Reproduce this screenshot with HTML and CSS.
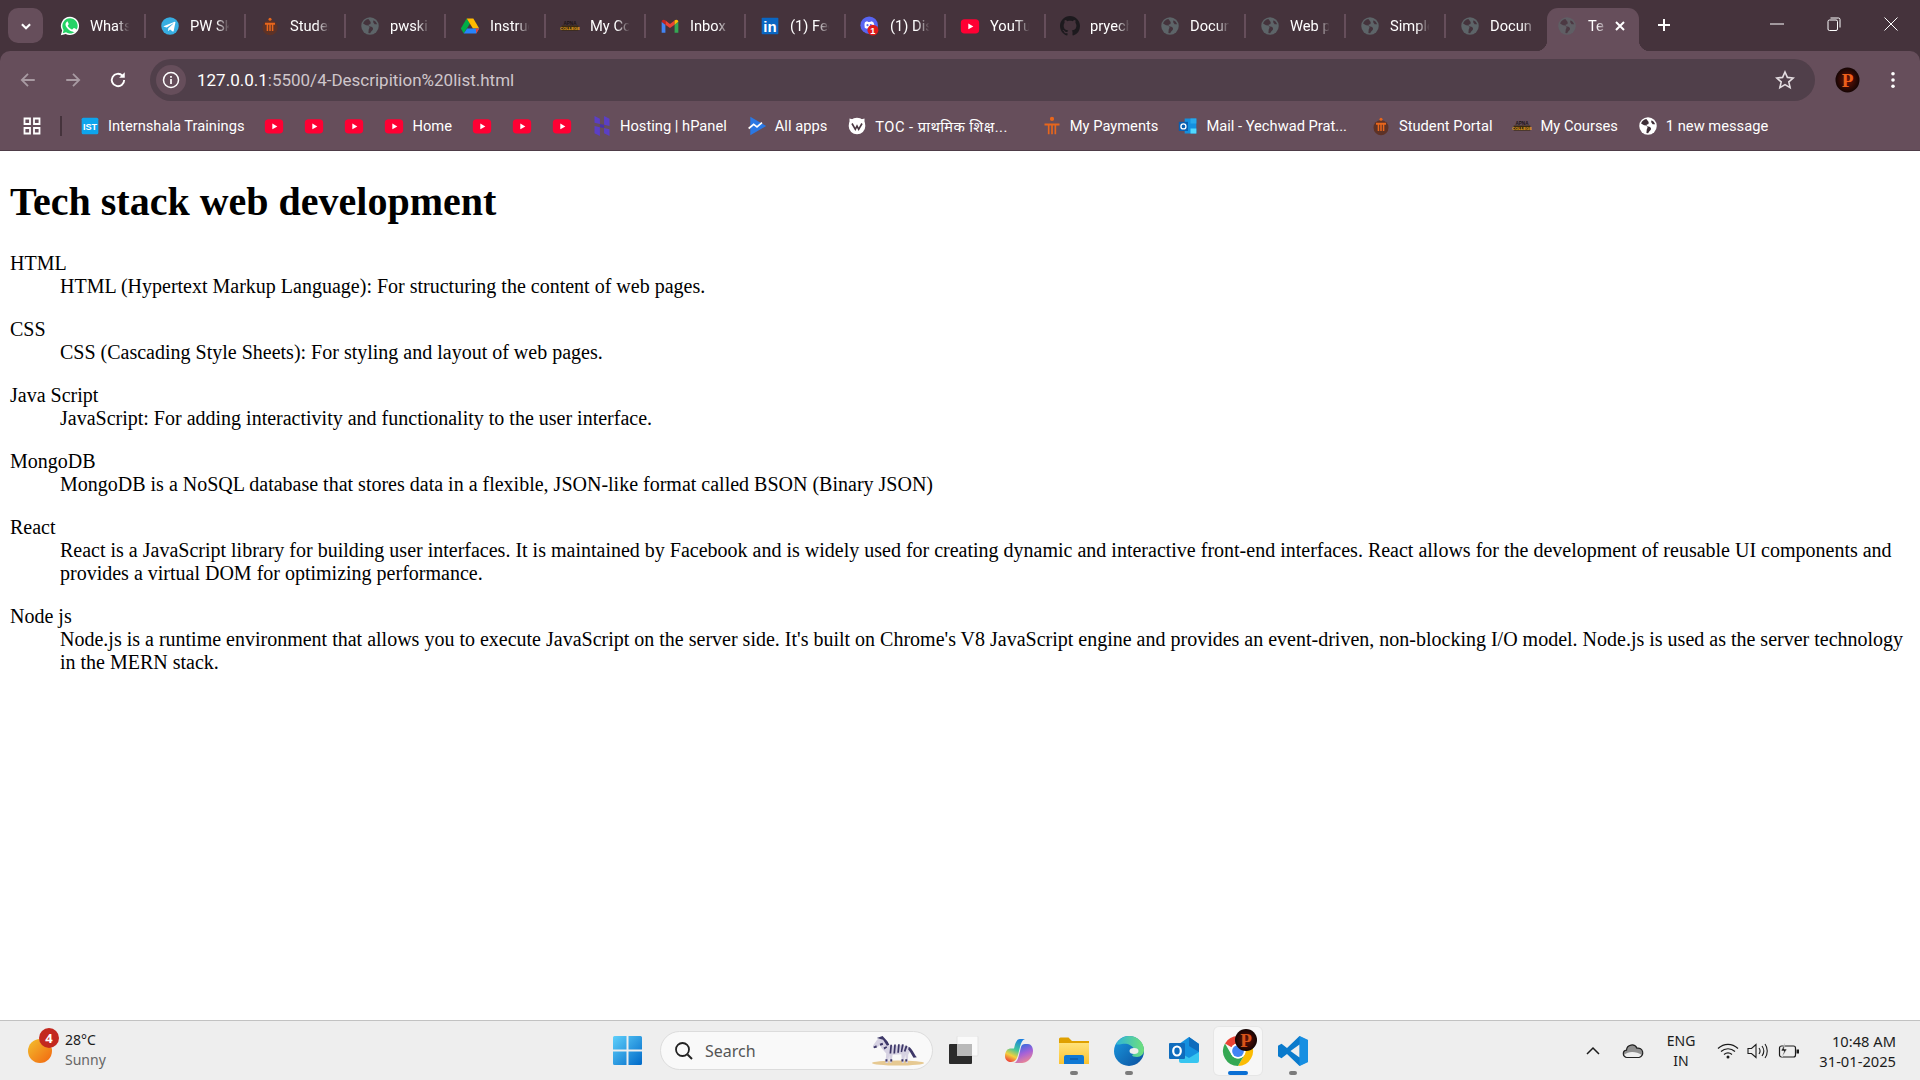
FILE: index.html
```html
<!DOCTYPE html>
<html lang="en">
<head>
    <meta charset="UTF-8">
    <meta name="viewport" content="width=device-width, initial-scale=1.0">
    <title>Tech stack web development</title>
    <link rel="stylesheet" href="styles.css">
</head>
<body>
    <!-- icon sprite -->
    <svg class="sprite" xmlns="http://www.w3.org/2000/svg">
        <defs>
            <linearGradient id="gWin" x1="0" y1="0" x2="1" y2="1"><stop offset="0" stop-color="#5fd0fb"/><stop offset="1" stop-color="#0069c8"/></linearGradient>
            <linearGradient id="gSun" x1="0" y1="0" x2="1" y2="1"><stop offset="0" stop-color="#f2c02e"/><stop offset="1" stop-color="#f2650f"/></linearGradient>
            <linearGradient id="gFolder" x1="0" y1="0" x2="0" y2="1"><stop offset="0" stop-color="#ffe27a"/><stop offset="1" stop-color="#fbc22f"/></linearGradient>
            <linearGradient id="gEdge" x1="0" y1="0" x2="1" y2="1"><stop offset="0" stop-color="#1a9be0"/><stop offset="1" stop-color="#0b4f9e"/></linearGradient>
            <linearGradient id="gEdgeTop" x1="0" y1="0" x2="1" y2="0"><stop offset="0" stop-color="#2fb5d8"/><stop offset="1" stop-color="#6fe07a"/></linearGradient>
            <linearGradient id="gCopL" x1="0.7" y1="0" x2="0.3" y2="1"><stop offset="0" stop-color="#1b7fe0"/><stop offset="0.45" stop-color="#3fc79b"/><stop offset="0.75" stop-color="#f4d03c"/><stop offset="1" stop-color="#ee4c3a"/></linearGradient>
            <linearGradient id="gCopR" x1="0.3" y1="0" x2="0.7" y2="1"><stop offset="0" stop-color="#2a6de0"/><stop offset="0.5" stop-color="#a561d8"/><stop offset="1" stop-color="#f38a8e"/></linearGradient>
            <radialGradient id="gAvatar"><stop offset="0" stop-color="#6b1408"/><stop offset="1" stop-color="#140403"/></radialGradient>

            <symbol id="i-whatsapp" viewBox="0 0 24 24">
                <path fill="#fff" d="M12 1a10.9 10.9 0 0 0-9.4 16.4L1 23l5.8-1.5A10.9 10.9 0 1 0 12 1z"/>
                <path fill="#25d366" d="M12 2.8a9.1 9.1 0 0 0-7.7 14l-1 3.8 3.9-1A9.1 9.1 0 1 0 12 2.8z"/>
                <path fill="#fff" d="M8.8 6.9c-.3 0-.7.1-1 .5-.4.4-1.2 1.1-1.2 2.7s1.2 3.2 1.3 3.4c.2.2 2.3 3.6 5.7 4.9 2.8 1.1 3.4.9 4 .8.6-.1 2-.8 2.2-1.6.3-.8.3-1.5.2-1.6-.1-.1-.3-.2-.7-.4l-2.3-1.1c-.3-.1-.5-.2-.8.2l-1.1 1.3c-.2.2-.4.3-.8.1-1-.5-1.9-.9-3.2-2.1-.9-.8-1.5-1.8-1.7-2.1-.2-.4 0-.5.1-.7l.6-.7c.2-.2.2-.4.3-.6.1-.2.1-.5 0-.6l-1.1-2.5c-.2-.6-.5-.5-.7-.5z"/>
            </symbol>
            <symbol id="i-telegram" viewBox="0 0 24 24">
                <circle cx="12" cy="12" r="10.5" fill="#37aee2"/>
                <path fill="#fff" d="M5 11.9l12.6-4.9c.6-.2 1.1.1.9.9l-2.1 10.1c-.2.7-.6.9-1.2.6l-3.2-2.4-1.6 1.5c-.2.2-.3.3-.7.3l.2-3.3 6-5.4c.3-.2-.1-.4-.4-.2l-7.4 4.7-3.2-1c-.7-.2-.7-.7.1-.8z"/>
            </symbol>
            <symbol id="i-student" viewBox="0 0 24 24">
                <circle cx="12" cy="14" r="9" fill="#5e3226"/>
                <circle cx="12" cy="4" r="1.8" fill="#e8661c"/>
                <path fill="#e8661c" d="M6 8h12v2.4H6zM8 10.4h1.8V18H8zM11.1 10.4h1.8V18h-1.8zM14.2 10.4H16V18h-1.8z"/>
            </symbol>
            <symbol id="i-globe" viewBox="0 0 24 24">
                <circle cx="12" cy="12" r="10.5" fill="#5d6468"/>
                <path fill="#44333c" d="M10 3.6c-2.8.5-5.3 2.5-6.3 5.3l3.6 2.1 2.7.4 1.5 2.3-1 2.5-.4 4.2 2 .4c.7-1.500 1.900-3.100 3.300-4.400.7-1.300-.1-3.100-1.700-3.500l-2.900-.5-.6-1.900 2.400-.8.200-2.500zM16.300 5.200l-.6 2.100 1.800 2.700 3.100-.2a9 9 0 0 0-4.300-4.600z"/>
            </symbol>
            <symbol id="i-globe-white" viewBox="0 0 24 24">
                <circle cx="12" cy="12" r="10.5" fill="#fff"/>
                <path fill="#3e2e37" d="M10 3.6c-2.8.5-5.3 2.5-6.3 5.3l3.6 2.1 2.7.4 1.5 2.3-1 2.5-.4 4.2 2 .4c.7-1.500 1.900-3.100 3.300-4.400.7-1.300-.1-3.100-1.700-3.500l-2.900-.5-.6-1.900 2.400-.8.200-2.500zM16.300 5.200l-.6 2.100 1.800 2.700 3.100-.2a9 9 0 0 0-4.300-4.600z"/>
            </symbol>
            <symbol id="i-drive" viewBox="0 0 24 24">
                <path fill="#00ac47" d="M8 3 1 15l3.5 6L12 9z"/>
                <path fill="#ffba00" d="M8 3h8l7 12h-7.5z"/>
                <path fill="#2684fc" d="M8.500 15H23l-3.500 6h-15z"/>
                <path fill="#ea4335" d="M19.500 21l3.500-6h-4z"/>
            </symbol>
            <symbol id="i-apna" viewBox="0 0 24 24">
                <text x="12" y="10.5" text-anchor="middle" font-family="Liberation Sans" font-weight="700" font-size="5.5" fill="#1b1416">APNA</text>
                <rect x="2" y="11.5" width="20" height="6" fill="#3a2a10"/>
                <text x="12" y="16.5" text-anchor="middle" font-family="Liberation Sans" font-weight="700" font-size="5" fill="#eaa61e">COLLEGE</text>
            </symbol>
            <symbol id="i-gmail" viewBox="0 0 24 24">
                <path fill="#4285f4" d="M2 20V7l4.500 3.400V20z"/>
                <path fill="#34a853" d="M17.500 20v-9.600L22 7v13z"/>
                <path fill="#ea4335" d="M6.500 10.400V5.300L12 9.500l5.500-4.200v5.100L12 14.500z"/>
                <path fill="#c5221f" d="M2 7c0-2.500 2.700-3.300 4.500-1.700v5.100z"/>
                <path fill="#fbbc04" d="M17.500 5.300C19.300 3.700 22 4.500 22 7l-4.500 3.400z"/>
            </symbol>
            <symbol id="i-linkedin" viewBox="0 0 24 24">
                <rect x="2" y="2" width="20" height="20" rx="1" fill="#0a66c2"/>
                <text x="12" y="19" text-anchor="middle" font-family="Liberation Sans" font-weight="700" font-size="18" fill="#fff">in</text>
            </symbol>
            <symbol id="i-discord" viewBox="0 0 24 24">
                <circle cx="11" cy="11" r="10.5" fill="#5865f2"/>
                <path fill="#fff" d="M6 7.500c1-.7 2.200-1.100 3-1.200l.4.800h3.200l.4-.800c.8.100 2 .5 3 1.200 1 2 1.500 4.200 1.300 6.500-1 .8-2.100 1.200-3 1.400l-.7-1.100H9.400l-.7 1.100c-.9-.2-2-.6-3-1.400C5.500 11.700 5 9.500 6 7.500z"/>
                <circle cx="9" cy="11" r="1.3" fill="#5865f2"/><circle cx="13" cy="11" r="1.3" fill="#5865f2"/>
                <circle cx="15.5" cy="17" r="6.5" fill="#e01b1b"/>
                <text x="15.5" y="21" text-anchor="middle" font-family="Liberation Sans" font-weight="700" font-size="11" fill="#fff">1</text>
            </symbol>
            <symbol id="i-youtube" viewBox="0 0 24 24">
                <rect x="1" y="4" width="22" height="17" rx="4.5" fill="#ff0033"/>
                <path fill="#fff" d="M10 9l6 3.500-6 3.500z"/>
            </symbol>
            <symbol id="i-github" viewBox="0 0 16 16">
                <path fill="#1d1a1e" d="M8 0C3.580 0 0 3.580 0 8c0 3.540 2.290 6.530 5.470 7.590.4.070.55-.17.55-.38 0-.19-.01-.82-.01-1.490-2.010.37-2.530-.49-2.690-.94-.09-.23-.48-.94-.82-1.130-.28-.15-.68-.52-.01-.53.63-.01 1.080.58 1.230.82.720 1.210 1.870.87 2.330.66.070-.52.280-.87.510-1.070-1.780-.2-3.640-.89-3.640-3.950 0-.87.310-1.590.820-2.150-.08-.2-.36-1.020.080-2.120 0 0 .67-.21 2.200.82.640-.18 1.320-.27 2-.27.680 0 1.360.09 2 .27 1.530-1.040 2.200-.82 2.200-.82.440 1.100.160 1.920.080 2.120.510.560.820 1.270.820 2.150 0 3.070-1.870 3.750-3.650 3.950.290.25.540.730.540 1.480 0 1.070-.01 1.930-.01 2.200 0 .21.150.46.550.38A8.013 8.013 0 0016 8c0-4.420-3.580-8-8-8z"/>
            </symbol>
            <symbol id="i-ist" viewBox="0 0 24 24">
                <rect x="2" y="2" width="20" height="20" rx="2" fill="#0ea5ec"/>
                <text x="12" y="16.5" text-anchor="middle" font-family="Liberation Sans" font-weight="700" font-size="11" fill="#fff">IST</text>
            </symbol>
            <symbol id="i-hostinger" viewBox="0 0 24 24">
                <path fill="#5b3fc4" d="M3 0l6.500 3.300v6.200L3 8zM21 24l-6.500-3.300v-6.200L21 16zM14.500 0 21 3.300V12l-6.500-1.600zM3 12l6.500 1.600V24L3 20.700z"/>
                <path fill="#4a32a8" d="M9.500 9.500l5 1v4l-5-1z"/>
            </symbol>
            <symbol id="i-allapps" viewBox="0 0 24 24">
                <path fill="#2a78e4" d="M4 1l19 11L4 23z"/>
                <path fill="none" stroke="#fff" stroke-width="2" d="M2 15l6-5 4 3 6-5"/>
            </symbol>
            <symbol id="i-toc" viewBox="0 0 24 24">
                <circle cx="12" cy="12" r="10" fill="#fff"/>
                <path fill="#fff" d="M3 3c3 1 6 1.500 9 1.500S18 4 21 3v9H3z"/>
                <path fill="none" stroke="#4a3842" stroke-width="2" d="M6 9l4 7 2-4 2 4 4-7"/>
            </symbol>
            <symbol id="i-payments" viewBox="0 0 24 24">
                <circle cx="12" cy="3.5" r="2.5" fill="#e8661c"/>
                <path fill="#e8661c" d="M3 9h18v2.500h-4V22h-2v-10.500h-2V22h-2v-10.500H9V22H7V11.500H3z"/>
            </symbol>
            <symbol id="i-mail" viewBox="0 0 24 24">
                <path fill="#1490df" d="M8 3h14v18H8z"/>
                <path fill="#28a8ea" d="M15 3h7v6h-7z"/>
                <path fill="#50d9ff" d="M15 15h7v6h-7z"/>
                <rect x="1" y="7" width="11" height="11" fill="#0a5fb0"/>
                <circle cx="6.5" cy="12.5" r="3" fill="none" stroke="#fff" stroke-width="1.6"/>
            </symbol>
            <symbol id="i-weather" viewBox="0 0 24 24">
                <circle cx="12" cy="12" r="12" fill="url(#gSun)"/>
            </symbol>
        </defs>
    </svg>

    <div class="screen">
        <header class="browser">
            <div class="tabstrip">
                <button class="tab-search"><svg viewBox="0 0 12 12"><path d="M2.500 4.500 6 8l3.500-3.500" fill="none" stroke="#fff" stroke-width="1.800"/></svg></button>
                <div class="tab"><svg class="ico"><use href="#i-whatsapp"/></svg><span class="tab-title">Whats</span></div>
                <div class="tab"><svg class="ico"><use href="#i-telegram"/></svg><span class="tab-title">PW Sk</span></div>
                <div class="tab"><svg class="ico"><use href="#i-student"/></svg><span class="tab-title">Studer</span></div>
                <div class="tab"><svg class="ico"><use href="#i-globe"/></svg><span class="tab-title">pwskil</span></div>
                <div class="tab"><svg class="ico"><use href="#i-drive"/></svg><span class="tab-title">Instruc</span></div>
                <div class="tab"><svg class="ico"><use href="#i-apna"/></svg><span class="tab-title">My Co</span></div>
                <div class="tab"><svg class="ico"><use href="#i-gmail"/></svg><span class="tab-title">Inbox</span></div>
                <div class="tab"><svg class="ico"><use href="#i-linkedin"/></svg><span class="tab-title">(1) Fee</span></div>
                <div class="tab"><svg class="ico"><use href="#i-discord"/></svg><span class="tab-title">(1) Dis</span></div>
                <div class="tab"><svg class="ico"><use href="#i-youtube"/></svg><span class="tab-title">YouTu</span></div>
                <div class="tab"><svg class="ico"><use href="#i-github"/></svg><span class="tab-title">pryech</span></div>
                <div class="tab"><svg class="ico"><use href="#i-globe"/></svg><span class="tab-title">Docun</span></div>
                <div class="tab"><svg class="ico"><use href="#i-globe"/></svg><span class="tab-title">Web p</span></div>
                <div class="tab"><svg class="ico"><use href="#i-globe"/></svg><span class="tab-title">Simple</span></div>
                <div class="tab tab-last"><svg class="ico"><use href="#i-globe"/></svg><span class="tab-title">Docun</span></div>
                <div class="tab-active">
                    <svg class="ico"><use href="#i-globe"/></svg><span class="tab-title tab-title-short">Te</span>
                    <svg class="tab-close" viewBox="0 0 12 12"><path d="M2 2l8 8M10 2l-8 8" stroke="#fff" stroke-width="2"/></svg>
                </div>
                <svg class="new-tab" viewBox="0 0 14 14"><path d="M7 1v12M1 7h12" stroke="#fff" stroke-width="2"/></svg>
                <div class="window-controls">
                    <span class="win-btn"><svg viewBox="0 0 14 14"><path d="M0 7h14" stroke="#fff" stroke-width="1"/></svg></span>
                    <span class="win-btn"><svg viewBox="0 0 14 14"><rect x="1" y="3" width="9.500" height="10.500" rx="1.500" fill="none" stroke="#fff"/><path d="M3.500 1h8a1.500 1.500 0 0 1 1.500 1.500v8" fill="none" stroke="#fff"/></svg></span>
                    <span class="win-btn"><svg viewBox="0 0 14 14"><path d="M.5.5l13 13M13.500.5l-13 13" stroke="#fff" stroke-width="1"/></svg></span>
                </div>
            </div>

            <div class="toolbar">
                <span class="nav-btn nav-off"><svg viewBox="0 0 16 16"><path d="M14 8H2.500M8 2.500 2.500 8 8 13.500" fill="none" stroke="currentColor" stroke-width="1.600"/></svg></span>
                <span class="nav-btn nav-off"><svg viewBox="0 0 16 16"><path d="M2 8h11.500M8 2.500 13.500 8 8 13.500" fill="none" stroke="currentColor" stroke-width="1.600"/></svg></span>
                <span class="nav-btn"><svg viewBox="0 0 16 16"><path d="M13.500 8a5.500 5.500 0 1 1-1.600-3.900" fill="none" stroke="currentColor" stroke-width="1.700"/><path d="M14 1v5H9z" fill="currentColor"/></svg></span>
                <div class="omnibox">
                    <span class="site-info"><svg viewBox="0 0 18 18"><circle cx="9" cy="9" r="7.500" fill="none" stroke="#fff" stroke-width="1.500"/><path d="M9 8v5M9 5v1.700" stroke="#fff" stroke-width="1.700"/></svg></span>
                    <span class="url"><span class="url-host">127.0.0.1</span>:5500/4-Descripition%20list.html</span>
                    <svg class="star" viewBox="0 0 20 20"><path d="M10 2l2.400 5.400 5.800.6-4.400 3.900 1.300 5.700L10 14.600l-5.100 3 1.300-5.700L1.800 8l5.800-.6z" fill="none" stroke="#e4dde1" stroke-width="1.600"/></svg>
                </div>
                <div class="toolbar-end">
                    <svg class="avatar" viewBox="0 0 26 26"><ellipse cx="13" cy="13" rx="12.500" ry="13" fill="url(#gAvatar)"/><text x="13" y="20" text-anchor="middle" font-family="Liberation Serif" font-weight="700" font-size="20" fill="#ee5f1b">P</text></svg>
                    <svg class="dots" viewBox="0 0 6 20"><circle cx="3" cy="3" r="2" fill="#fff"/><circle cx="3" cy="10" r="2" fill="#fff"/><circle cx="3" cy="17" r="2" fill="#fff"/></svg>
                </div>
            </div>

            <nav class="bookmarks">
                <svg class="apps-grid" viewBox="0 0 18 18"><path d="M1.500 1.500h5.500V7H1.500zM11 1.500h5.500V7H11zM1.500 11h5.500v5.500H1.500zM11 11h5.500v5.500H11z" fill="none" stroke="#fff" stroke-width="1.800"/></svg>
                <span class="bm-sep"></span>
                <a class="bm"><svg class="ico"><use href="#i-ist"/></svg>Internshala Trainings</a>
                <a class="bm"><svg class="ico"><use href="#i-youtube"/></svg></a>
                <a class="bm"><svg class="ico"><use href="#i-youtube"/></svg></a>
                <a class="bm"><svg class="ico"><use href="#i-youtube"/></svg></a>
                <a class="bm"><svg class="ico"><use href="#i-youtube"/></svg>Home</a>
                <a class="bm"><svg class="ico"><use href="#i-youtube"/></svg></a>
                <a class="bm"><svg class="ico"><use href="#i-youtube"/></svg></a>
                <a class="bm"><svg class="ico"><use href="#i-youtube"/></svg></a>
                <a class="bm"><svg class="ico"><use href="#i-hostinger"/></svg>Hosting | hPanel</a>
                <a class="bm"><svg class="ico"><use href="#i-allapps"/></svg>All apps</a>
                <a class="bm bm-toc"><svg class="ico"><use href="#i-toc"/></svg>TOC - प्राथमिक शिक्ष...</a>
                <a class="bm"><svg class="ico"><use href="#i-payments"/></svg>My Payments</a>
                <a class="bm bm-mail"><svg class="ico"><use href="#i-mail"/></svg>Mail - Yechwad Prat...</a>
                <a class="bm"><svg class="ico"><use href="#i-student"/></svg>Student Portal</a>
                <a class="bm"><svg class="ico"><use href="#i-apna"/></svg>My Courses</a>
                <a class="bm"><svg class="ico"><use href="#i-globe-white"/></svg>1 new message</a>
            </nav>
        </header>

        <main class="page">
            <h1>Tech stack web development</h1>
            <dl>
                <dt>HTML</dt>
                <dd>HTML (Hypertext Markup Language): For structuring the content of web pages.</dd>
            </dl>
            <dl>
                <dt>CSS</dt>
                <dd>CSS (Cascading Style Sheets): For styling and layout of web pages.</dd>
            </dl>
            <dl>
                <dt>Java Script</dt>
                <dd>JavaScript: For adding interactivity and functionality to the user interface.</dd>
            </dl>
            <dl>
                <dt>MongoDB</dt>
                <dd>MongoDB is a NoSQL database that stores data in a flexible, JSON-like format called BSON (Binary JSON)</dd>
            </dl>
            <dl>
                <dt>React</dt>
                <dd>React is a JavaScript library for building user interfaces. It is maintained by Facebook and is widely used for creating dynamic and interactive front-end interfaces. React allows for the development of reusable UI components and provides a virtual DOM for optimizing performance.</dd>
            </dl>
            <dl>
                <dt>Node js</dt>
                <dd>Node.js is a runtime environment that allows you to execute JavaScript on the server side. It's built on Chrome's V8 JavaScript engine and provides an event-driven, non-blocking I/O model. Node.js is used as the server technology in the MERN stack.</dd>
            </dl>
        </main>

        <footer class="taskbar">
            <div class="weather">
                <div class="weather-icon">
                    <svg class="sun"><use href="#i-weather"/></svg>
                    <span class="weather-badge">4</span>
                </div>
                <div class="weather-text">
                    <span>28°C</span>
                    <span class="weather-sub">Sunny</span>
                </div>
            </div>

            <div class="task-center">
                <svg class="start" viewBox="0 0 29 29"><path fill="url(#gWin)" d="M0 1.500A1.500 1.500 0 0 1 1.500 0h12v13.500H0zM15.500 0h12A1.500 1.500 0 0 1 29 1.500v12H15.500zM0 15.500h13.500V29h-12A1.500 1.500 0 0 1 0 27.500zM15.500 15.500H29v12a1.500 1.500 0 0 1-1.500 1.500h-12z"/></svg>
                <div class="searchbox">
                    <svg class="search-glass" viewBox="0 0 20 20"><circle cx="8.500" cy="8.500" r="6.500" fill="none" stroke="#222" stroke-width="1.800"/><path d="M13.500 13.500 18 18" stroke="#222" stroke-width="2"/></svg>
                    <span class="search-label">Search</span>
                    <svg class="zebra" viewBox="20 6 60 38">
                        <ellipse cx="49" cy="38" rx="27" ry="2.600" fill="#e6c992"/>
                        <path fill="#d6d2e2" d="M36 38l.8-10-5-5.500-1.500-3-3 2.500-3.500.5-.8-2.500 4.500-6.500 4-1.500 4 2 5 6 13-.5 6 2 1.500 5-1.500 3-.3 8.500h-1.800l-1-8.500-1.500 8.500h-1.800l-.7-9-9 .5-1.200 8.500h-1.800l-.6-8-1 8z"/>
                        <path fill="#3d3768" d="M27 12l6-2 5 5.500 2 3.500-2.500 1-4-6zM23.500 21l3-1.500 .7 2.500-3 .6zM30 18l3-1 .6 2-2.800 1zM34 22l3-1.500 .8 1.500-3 2zM41 19l1.800 0-.8 9-1.800 0zM45 18.700l1.800 0-.8 9.300-1.800 0zM49 18.500l1.800 0-.8 8.700-1.800 0zM53 18.500l2 .4-1.800 8-1.500-.5zM57 19.500l1.800 1-2.300 6-1.500-1zM60 21c4 2 5 7 8.500 11l-3.500 .5c-2-3-3.500-6.500-5.500-8.500zM36 34h2v2.500h-2zM41 34h2v2.500h-2zM52.500 34h2v2.500h-2zM56.500 34h2v2.500h-2z"/>
                    </svg>
                </div>
                <div class="task-apps">
                    <span class="task-tile">
                        <svg class="task-ico" viewBox="0 0 30 30"><rect x="8" y="0" width="21" height="20" rx="1" fill="#fafafa" stroke="#e2e2e2"/><rect x="0" y="8" width="23" height="20" rx="1" fill="#2b2b2b"/><rect x="8" y="8" width="15" height="12" fill="#b9b9b9"/></svg>
                    </span>
                    <span class="task-tile">
                        <svg class="task-ico" viewBox="0 0 30 30"><path fill="url(#gCopL)" d="M16 3h5c-3 1-4 4-5 8l-2 8c-1 4-3 7-7 7-3 0-6-2-6-6 0-2 .5-4 2-6 1-1 2.500-1.500 4-1.500h3l1-4c1-3 2.500-5.500 5-5.500z"/><path fill="url(#gCopR)" d="M14 27h-4c3-1 4-4 5-8l2-8c.5-2 2-3 4-3h3c3 0 5 3 5 7s-2 7-4 9c-2 2-5 3-7 3z"/></svg>
                    </span>
                    <span class="task-tile task-open">
                        <svg class="task-ico" viewBox="0 0 30 30"><path fill="#dfa000" d="M0 3a1.500 1.500 0 0 1 1.500-1.500h8L13 5h17v23H0z"/><path fill="url(#gFolder)" d="M0 7h30v21H0z"/><path fill="#0f78d4" d="M5 21a2 2 0 0 1 2-2h16a2 2 0 0 1 2 2v7H5z"/><path d="M11 23h8" stroke="#0a4f94" stroke-width="1"/></svg>
                    </span>
                    <span class="task-tile task-open">
                        <svg class="task-ico" viewBox="0 0 30 30"><circle cx="15" cy="15" r="15" fill="url(#gEdge)"/><path fill="url(#gEdgeTop)" d="M2 8C5 3 10 0 15 0c8 0 15 6 15 14 0 4-3 7-7 7-3 0-5-1-5-2 3-1 3-4 2-6-2-4-7-6-12-5-3 .5-5 1-6 0z"/><ellipse cx="20" cy="15" rx="4.500" ry="3" fill="#eee"/></svg>
                    </span>
                    <span class="task-tile">
                        <svg class="task-ico" viewBox="0 0 30 30"><path fill="#36c5f0" d="M10 14h20v11a2 2 0 0 1-2 2H12a2 2 0 0 1-2-2z"/><path fill="#1490df" d="M10 8l10-7 10 7v8l-10 6-10-6z"/><path fill="#0f6cbd" d="M20 1l10 7v8l-10-6z"/><rect x="0" y="7" width="16" height="16" rx="1" fill="#0f6cbd"/><ellipse cx="8" cy="15" rx="3.800" ry="4.500" fill="none" stroke="#fff" stroke-width="2.200"/></svg>
                    </span>
                    <span class="task-tile task-active">
                        <svg class="task-chrome" viewBox="0 0 48 48">
                            <g transform="translate(9 9) scale(1.250)">
                                <path fill="#ea4335" d="M12 0A12 12 0 0 1 22.400 6H12a6 6 0 0 0-5.200 3L1.600 6A12 12 0 0 1 12 0z"/>
                                <path fill="#fbbc04" d="M22.400 6A12 12 0 0 1 12 24l5.200-9A6 6 0 0 0 12 6z"/>
                                <path fill="#34a853" d="M1.600 6A12 12 0 0 0 12 24l5.200-9a6 6 0 0 1-10.400 0z"/>
                                <circle cx="12" cy="12" r="6" fill="#fff"/>
                                <circle cx="12" cy="12" r="4.700" fill="#4285f4"/>
                            </g>
                            <circle cx="32" cy="13" r="11" fill="url(#gAvatar)"/>
                            <text x="32" y="20" text-anchor="middle" font-family="Liberation Serif" font-weight="700" font-size="19" fill="#d9541a">P</text>
                        </svg>
                    </span>
                    <span class="task-tile task-open">
                        <svg class="task-ico" viewBox="0 0 30 30"><path fill="#0a7acc" fill-rule="evenodd" d="M21.500 0 30 4v22l-8.500 4L9 18l-5.500 4.200L0 20.300V9.700L3.500 7.800 9 12zM21.500 8.500 12.500 15l9 6.500z"/><path fill="#1f9cf0" d="M21.500 0 30 4v22l-8.500 4z" fill-opacity=".6"/></svg>
                    </span>
                </div>
            </div>

            <div class="tray">
                <svg class="tray-ico chevron" viewBox="0 0 16 16"><path d="M2 11l6-6 6 6" fill="none" stroke="#1c1c1c" stroke-width="1.500"/></svg>
                <svg class="tray-ico cloud" viewBox="0 0 22 16"><path d="M5 14.500a3.700 3.700 0 0 1-.5-7.400A5.500 5.500 0 0 1 15 5.200a4.700 4.700 0 0 1 2 9.300z" fill="#8f8f8f"/><path d="M2 12c4-4 12-4 18 0l-3 2.500H5z" fill="#eee"/><path d="M5 14.500a3.700 3.700 0 0 1-3.700-3.700A3.700 3.700 0 0 1 4.500 7.100 5.500 5.500 0 0 1 15 5.200a4.700 4.700 0 0 1 2 9.300z" fill="none" stroke="#222" stroke-width="1.200"/></svg>
                <div class="lang"><span>ENG</span><span>IN</span></div>
                <svg class="tray-ico wifi" viewBox="0 0 22 16"><path d="M1 5.500c6-5.500 14-5.500 20 0M4 8.500c4-3.700 10-3.700 14 0M7 11.500c2.500-2 5.500-2 8 0" fill="none" stroke="#1c1c1c" stroke-width="1.200"/><circle cx="11" cy="14" r="1.500" fill="#1c1c1c"/></svg>
                <svg class="tray-ico speaker" viewBox="0 0 22 16"><path d="M1 5.500h3.500L9 1.500v13l-4.500-4H1z" fill="none" stroke="#1c1c1c" stroke-width="1.100"/><path d="M12 5c1.300 1.800 1.300 4.200 0 6M15 3c2.200 3 2.200 7 0 10M18 1c3 4 3 10 0 14" fill="none" stroke="#1c1c1c" stroke-width="1.100"/></svg>
                <svg class="tray-ico battery" viewBox="0 0 22 16"><rect x="1.500" y="3" width="16" height="11" rx="2" fill="none" stroke="#1c1c1c" stroke-width="1.200"/><rect x="18.500" y="6.500" width="2.500" height="4" fill="#1c1c1c"/><path d="M7 0 3 8h3l-2 6 5-8H6z" fill="#1c1c1c" stroke="#eee" stroke-width=".6"/></svg>
                <div class="clock"><span>10:48 AM</span><span>31-01-2025</span></div>
            </div>
        </footer>
    </div>
</body>
</html>
```

FILE: styles.css
```css
* {
    box-sizing: border-box;
}

html, body {
    margin: 0;
    padding: 0;
    height: 100%;
}

.sprite {
    display: block;
    width: 0;
    height: 0;
}

.screen {
    display: flex;
    flex-direction: column;
    height: 1080px;
    overflow: hidden;
    font-family: Roboto, "Noto Sans", sans-serif;
}

/* browser frame */
.browser {
    background-color: #45333c;
    color: #fff;
}

.ico {
    width: 20px;
    height: 20px;
    flex-shrink: 0;
}

.tabstrip {
    display: flex;
    align-items: flex-start;
    height: 51px;
    padding: 8px 1px 0 8px;
}

.tab-search {
    display: flex;
    justify-content: center;
    align-items: center;
    width: 35px;
    height: 35px;
    margin-right: 3px;
    padding: 0;
    border: none;
    border-radius: 10px;
    background-color: #664e5b;
}

.tab-search svg {
    width: 14px;
    height: 14px;
}

.tab {
    display: flex;
    align-items: center;
    gap: 10px;
    width: 100px;
    height: 35px;
    padding-left: 14px;
}

.tab::after {
    content: "";
    width: 2px;
    height: 24px;
    margin-left: auto;
    background-color: #664e5b;
}

.tab-last::after {
    display: none;
}

.tab-title {
    width: 52px;
    overflow: hidden;
    white-space: nowrap;
    font-size: 14.7px;
    -webkit-mask-image: linear-gradient(to right, #000 60%, transparent 90%);
    mask-image: linear-gradient(to right, #000 60%, transparent 90%);
}

.tab-active {
    position: relative;
    display: flex;
    align-items: center;
    width: 92px;
    height: 43px;
    margin-left: 1px;
    padding: 0 13px 8px 10px;
    border-radius: 11px 11px 0 0;
    background-color: #664e5b;
}

.tab-active .ico {
    opacity: 0.75;
}

.tab-active::before,
.tab-active::after {
    content: "";
    position: absolute;
    bottom: 0;
    width: 11px;
    height: 11px;
}

.tab-active::before {
    left: -11px;
    background: radial-gradient(circle at 0 0, transparent 11px, #664e5b 11.5px);
}

.tab-active::after {
    right: -11px;
    background: radial-gradient(circle at 100% 0, transparent 11px, #664e5b 11.5px);
}

.tab-title-short {
    width: 20px;
    margin-left: 11px;
    -webkit-mask-image: linear-gradient(to right, #000 40%, transparent 100%);
    mask-image: linear-gradient(to right, #000 40%, transparent 100%);
}

.tab-close {
    width: 12px;
    height: 12px;
    margin-left: auto;
}

.new-tab {
    width: 14px;
    height: 14px;
    margin: 10px 0 0 18px;
}

.window-controls {
    display: flex;
    margin-left: auto;
}

.win-btn {
    display: flex;
    justify-content: center;
    width: 57px;
    padding-top: 9px;
}

.win-btn svg {
    width: 14px;
    height: 14px;
}

.toolbar {
    display: flex;
    align-items: center;
    height: 50px;
    padding: 8px 0 0 5px;
    border-radius: 10px 10px 0 0;
    background-color: #664e5b;
}

.nav-btn {
    display: flex;
    justify-content: center;
    width: 45px;
    color: #fff;
}

.nav-btn svg {
    width: 18px;
    height: 18px;
}

.nav-off {
    color: #a89aa2;
}

.omnibox {
    display: flex;
    align-items: center;
    flex: 1;
    height: 42px;
    margin-left: 10px;
    padding: 0 20px 0 6px;
    border-radius: 21px;
    background-color: #503f4a;
}

.site-info {
    display: flex;
    justify-content: center;
    align-items: center;
    width: 30px;
    height: 30px;
    border-radius: 50%;
    background-color: #664e5b;
}

.site-info svg {
    width: 18px;
    height: 18px;
}

.url {
    margin-left: 11px;
    font-size: 17px;
    color: #cfc6cb;
}

.url-host {
    color: #fff;
}

.star {
    width: 20px;
    height: 20px;
    margin-left: auto;
}

.toolbar-end {
    display: flex;
    align-items: center;
    width: 105px;
    padding-left: 20px;
}

.avatar {
    width: 25px;
    height: 26px;
}

.dots {
    width: 6px;
    height: 18px;
    margin-left: 30px;
}

.bookmarks {
    display: flex;
    align-items: center;
    height: 50px;
    padding-left: 23px;
    border-bottom: 1px solid #4e3c47;
    background-color: #664e5b;
}

.apps-grid {
    width: 18px;
    height: 18px;
}

.bm-sep {
    width: 2px;
    height: 20px;
    margin: 0 8px 0 19px;
    background-color: #45333c;
}

.bm {
    display: flex;
    align-items: center;
    gap: 8px;
    padding: 0 10px;
    font-size: 14.7px;
    white-space: nowrap;
}

.bm-toc {
    padding-right: 24px;
    letter-spacing: 0.5px;
}

.bm-mail {
    padding-right: 14px;
}

/* the page itself, shown at 125% */
.page {
    flex: 1;
    padding: 0 10px;
    overflow: hidden;
    background-color: #fff;
    color: #000;
    font-family: "Liberation Serif", serif;
    font-size: 20px;
}

.page h1 {
    margin: 26.8px 0;
    font-size: 40px;
}

.page dl {
    margin: 20px 0;
}

.page dd {
    margin-left: 50px;
}

/* windows taskbar */
.taskbar {
    display: grid;
    grid-template-columns: 613px auto 1fr;
    align-items: center;
    height: 60px;
    border-top: 1px solid #c2c2c2;
    background-color: #eee;
    color: #1c1c1c;
    font-family: "Noto Sans", sans-serif;
    font-size: 14px;
}

.weather {
    display: flex;
    align-items: center;
    padding-left: 28px;
}

.weather-icon {
    position: relative;
    width: 24px;
    height: 24px;
}

.sun {
    display: block;
    width: 24px;
    height: 24px;
}

.weather-badge {
    position: absolute;
    top: -11px;
    left: 11px;
    width: 20px;
    height: 20px;
    border-radius: 50%;
    background-color: #c3281f;
    color: #fff;
    font-size: 13px;
    font-weight: 700;
    line-height: 20px;
    text-align: center;
}

.weather-text {
    display: flex;
    flex-direction: column;
    margin: -2px 0 0 13px;
    line-height: 20px;
}

.weather-sub {
    color: #666;
}

.task-center {
    display: flex;
    align-items: center;
}

.start {
    width: 29px;
    height: 29px;
}

.searchbox {
    display: flex;
    align-items: center;
    width: 273px;
    height: 39px;
    margin-left: 18px;
    padding-left: 13px;
    overflow: hidden;
    border: 1px solid #dcdcdc;
    border-radius: 20px;
    background-color: #f9f9f9;
}

.search-glass {
    width: 20px;
    height: 20px;
}

.search-label {
    margin-left: 11px;
    color: #555;
    font-size: 16px;
}

.zebra {
    width: 58px;
    height: 37px;
    margin-left: auto;
    margin-right: 4px;
}

.task-apps {
    display: flex;
    margin-left: 3px;
}

.task-tile {
    position: relative;
    display: flex;
    justify-content: center;
    align-items: center;
    width: 55px;
    height: 48px;
}

.task-ico {
    width: 30px;
    height: 30px;
}

.task-open::after,
.task-active::after {
    content: "";
    position: absolute;
    bottom: 0;
    left: 50%;
    width: 8px;
    height: 4px;
    margin-left: -4px;
    border-radius: 2px;
    background-color: #7b7b7b;
}

.task-active {
    width: 48px;
    margin: 0 3px;
    border-radius: 5px;
    background-color: #f7f7f7;
    box-shadow: 0 0 0 1px #e6e6e6;
}

.task-active::after {
    width: 20px;
    margin-left: -10px;
    background-color: #0a6fd4;
}

.task-chrome {
    width: 48px;
    height: 48px;
}

.tray {
    display: flex;
    align-items: center;
    justify-content: flex-end;
    padding-right: 24px;
}

.tray-ico {
    flex-shrink: 0;
}

.chevron {
    width: 16px;
    height: 16px;
}

.cloud {
    width: 22px;
    height: 16px;
    margin-left: 21px;
}

.lang {
    display: flex;
    flex-direction: column;
    align-items: center;
    margin-left: 23px;
    line-height: 20px;
}

.wifi {
    width: 22px;
    height: 16px;
    margin-left: 22px;
}

.speaker {
    width: 22px;
    height: 16px;
    margin-left: 8px;
}

.battery {
    width: 22px;
    height: 16px;
    margin-left: 9px;
}

.clock {
    display: flex;
    flex-direction: column;
    align-items: flex-end;
    margin-left: 19px;
    font-size: 14.7px;
    line-height: 20px;
}
```
